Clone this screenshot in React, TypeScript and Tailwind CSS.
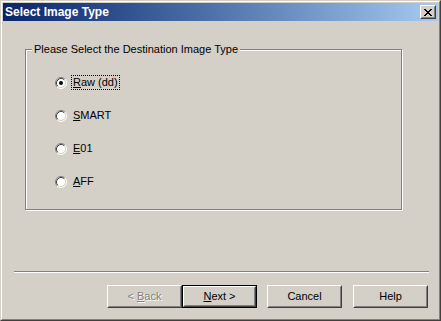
import type { ReactNode } from "react"

function Radio({ checked }: { checked?: boolean }) {
  return (
    <svg width="12" height="12" viewBox="0 0 12 12" className="shrink-0 block">
      <circle cx="6" cy="6" r="5" fill="#fff" />
      <path d="M2.11 9.89A5.5 5.5 0 0 1 9.89 2.11" fill="none" stroke="#808080" />
      <path d="M2.82 9.18A4.5 4.5 0 0 1 9.18 2.82" fill="none" stroke="#404040" />
      <path d="M9.89 2.11A5.5 5.5 0 0 1 2.11 9.89" fill="none" stroke="#fff" />
      <path d="M9.18 2.82A4.5 4.5 0 0 1 2.82 9.18" fill="none" stroke="#d4d0c8" />
      {checked && <circle cx="6" cy="6" r="2" fill="#000" />}
    </svg>
  )
}

function CloseButton() {
  // classic 8x7 pixel X
  const px = [
    [0, 0], [1, 0], [6, 0], [7, 0],
    [1, 1], [2, 1], [5, 1], [6, 1],
    [2, 2], [3, 2], [4, 2], [5, 2],
    [3, 3], [4, 3],
    [2, 4], [3, 4], [4, 4], [5, 4],
    [1, 5], [2, 5], [5, 5], [6, 5],
    [0, 6], [1, 6], [6, 6], [7, 6],
  ]
  return (
    <div className="w-[16px] h-[14px] border border-t-white border-l-white border-r-[#404040] border-b-[#404040] bg-[#d4d0c8]">
      <div className="h-full border border-t-[#d4d0c8] border-l-[#d4d0c8] border-r-[#808080] border-b-[#808080] flex items-center justify-center">
        <svg width="8" height="7" viewBox="0 0 8 7" shapeRendering="crispEdges">
          {px.map(([x, y]) => (
            <rect key={`${x}-${y}`} x={x} y={y} width="1" height="1" fill="#000" />
          ))}
        </svg>
      </div>
    </div>
  )
}

function Button({
  children,
  isDefault,
  disabled,
  className = "",
}: {
  children: ReactNode
  isDefault?: boolean
  disabled?: boolean
  className?: string
}) {
  const face = (
    <div className="h-full border border-t-white border-l-white border-r-[#404040] border-b-[#404040]">
      <div
        className={`h-full border border-t-[#d4d0c8] border-l-[#d4d0c8] border-r-[#808080] border-b-[#808080] flex items-center justify-center ${
          disabled ? "text-[#808080] [text-shadow:1px_1px_0_#fff]" : "text-black"
        }`}
      >
        <span className="whitespace-pre">{children}</span>
      </div>
    </div>
  )
  return (
    <div className={`w-[75px] h-[23px] ${className}`}>
      {isDefault ? <div className="h-full border border-black">{face}</div> : face}
    </div>
  )
}

export default function App() {
  const types = [
    { key: "R", rest: "aw (dd)", checked: true },
    { key: "S", rest: "MART" },
    { key: "E", rest: "01" },
    { key: "A", rest: "FF" },
  ]

  return (
    <div className="w-[441px] h-[321px] border border-t-[#d4d0c8] border-l-[#d4d0c8] border-r-[#404040] border-b-[#404040] bg-[#d4d0c8] font-['Liberation_Sans',Arial,sans-serif] text-[11px] text-black">
      <div className="h-full border border-t-white border-l-white border-r-[#808080] border-b-[#808080] p-px flex flex-col">
        <div className="h-[18px] shrink-0 flex items-center justify-between bg-linear-to-r from-[#0a246a] to-[#a6caf0] pl-[2px] pr-[2px]">
          <span className="text-white font-bold text-[12px] leading-none">Select Image Type</span>
          <CloseButton />
        </div>

        <div className="flex-1 flex flex-col">
          <div className="relative ml-[22px] mt-[28px] w-[377px] h-[161px] border border-[#808080] shadow-[inset_1px_1px_0_#fff,1px_1px_0_#fff]">
            <span className="absolute left-[6px] -top-[7px] px-[2px] bg-[#d4d0c8] leading-[13px]">
              Please Select the Destination Image Type
            </span>
            <div className="flex flex-col gap-[18px] pl-[29px] pt-[25px]">
              {types.map((t) => (
                <div key={t.key} className="flex items-start h-[15px]">
                  <div className="mt-[2px]">
                    <Radio checked={t.checked} />
                  </div>
                  <span
                    className={`ml-[4px] h-[15px] px-px border leading-[13px] ${
                      t.checked ? "border-dotted border-black" : "border-transparent"
                    }`}
                  >
                    <u>{t.key}</u>
                    {t.rest}
                  </span>
                </div>
              ))}
            </div>
          </div>

          <div className="ml-[11px] mt-[61px] w-[415px] h-[2px] border-t border-b border-t-[#808080] border-b-white" />

          <div className="flex ml-[104px] mt-[12px]">
            <Button disabled>
              {"< "}
              <u>B</u>ack
            </Button>
            <Button isDefault>
              <u>N</u>
              {"ext >"}
            </Button>
            <Button className="ml-[10px]">Cancel</Button>
            <Button className="ml-[11px]">Help</Button>
          </div>
        </div>
      </div>
    </div>
  )
}
